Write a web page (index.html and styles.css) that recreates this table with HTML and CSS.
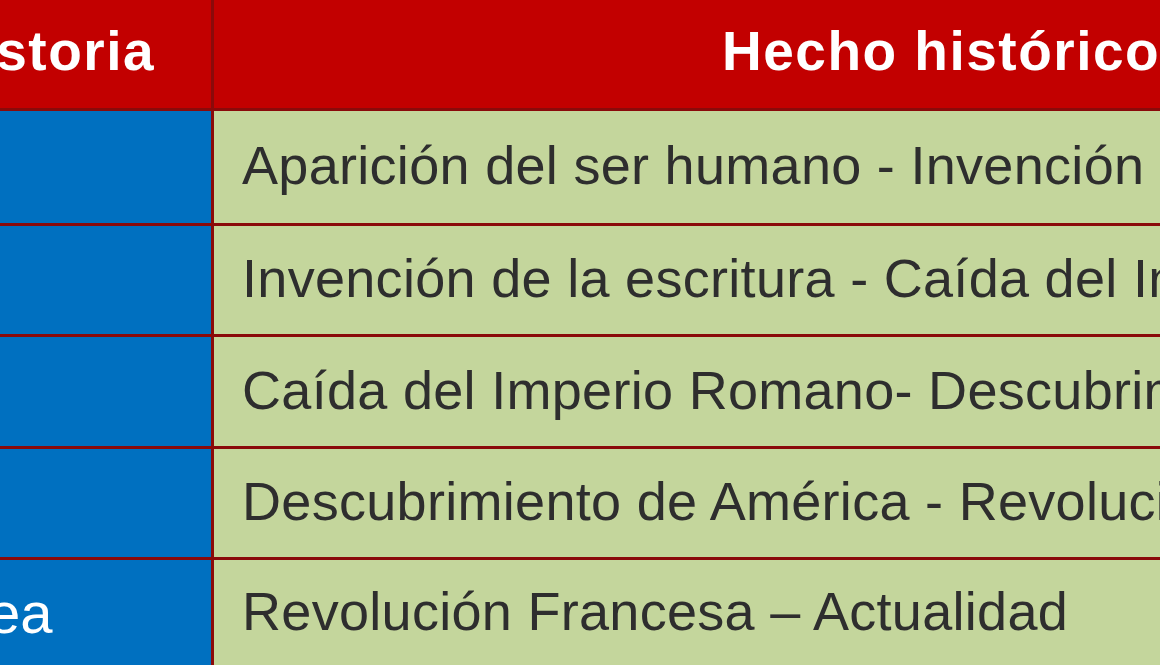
FILE: index.html
```html
<!DOCTYPE html>
<html lang="es">
<head>
<meta charset="utf-8">
<title>Edades de la Historia</title>
<link rel="stylesheet" href="styles.css">
</head>
<body>
<div class="viewport">
  <div class="table">
    <div class="cell head left"><span>Edades de la Historia</span></div>
    <div class="cell head right"><span>Hecho histórico</span></div>

    <div class="cell age r1"><span>Prehistoria</span></div>
    <div class="cell fact r1"><span>Aparición del ser humano - Invención de la escritura</span></div>

    <div class="cell age r2"><span>Edad Antigua</span></div>
    <div class="cell fact r2"><span>Invención de la escritura - Caída del Imperio Romano</span></div>

    <div class="cell age r3"><span>Edad Media</span></div>
    <div class="cell fact r3"><span>Caída del Imperio Romano- Descubrimiento de América</span></div>

    <div class="cell age r4"><span>Edad Moderna</span></div>
    <div class="cell fact r4"><span>Descubrimiento de América - Revolución Francesa</span></div>

    <div class="cell age r5"><span>Edad Contemporánea</span></div>
    <div class="cell fact r5"><span>Revolución Francesa – Actualidad</span></div>
  </div>
</div>
</body>
</html>
```

FILE: styles.css
```css
html, body {
  margin: 0;
  padding: 0;
  width: 1160px;
  height: 665px;
  overflow: hidden;
  background: #8a0a0a;
}

.viewport {
  width: 1160px;
  height: 665px;
  overflow: hidden;
}

.table {
  margin-left: -600px;
  width: 2238px;
  height: 665px;
  display: grid;
  grid-template-columns: 811px 1424px;
  grid-template-rows: 108px 112px 108px 109px 108px 1fr;
  column-gap: 3px;
  row-gap: 3px;
  background: #8a0a0a;
  font-family: "Liberation Sans", Arial, sans-serif;
}

.cell {
  display: flex;
  align-items: center;
  white-space: nowrap;
  overflow: hidden;
}

.head {
  background: #c20000;
  color: #ffffff;
  font-weight: bold;
  font-size: 55px;
  letter-spacing: 1.5px;
  padding-bottom: 7px;
  box-sizing: border-box;
}

.head.left {
  justify-content: flex-end;
  padding-right: 56px;
}

.head.right {
  justify-content: flex-start;
  padding-left: 508px;
}

.age {
  background: #0070c0;
  color: #ffffff;
  font-size: 58px;
  padding-left: 85px;
  box-sizing: border-box;
}

.fact {
  background: #c4d69c;
  color: #2e2e2e;
  font-size: 54px;
  letter-spacing: 0.3px;
  padding-left: 28px;
  padding-bottom: 4px;
  box-sizing: border-box;
}
```
